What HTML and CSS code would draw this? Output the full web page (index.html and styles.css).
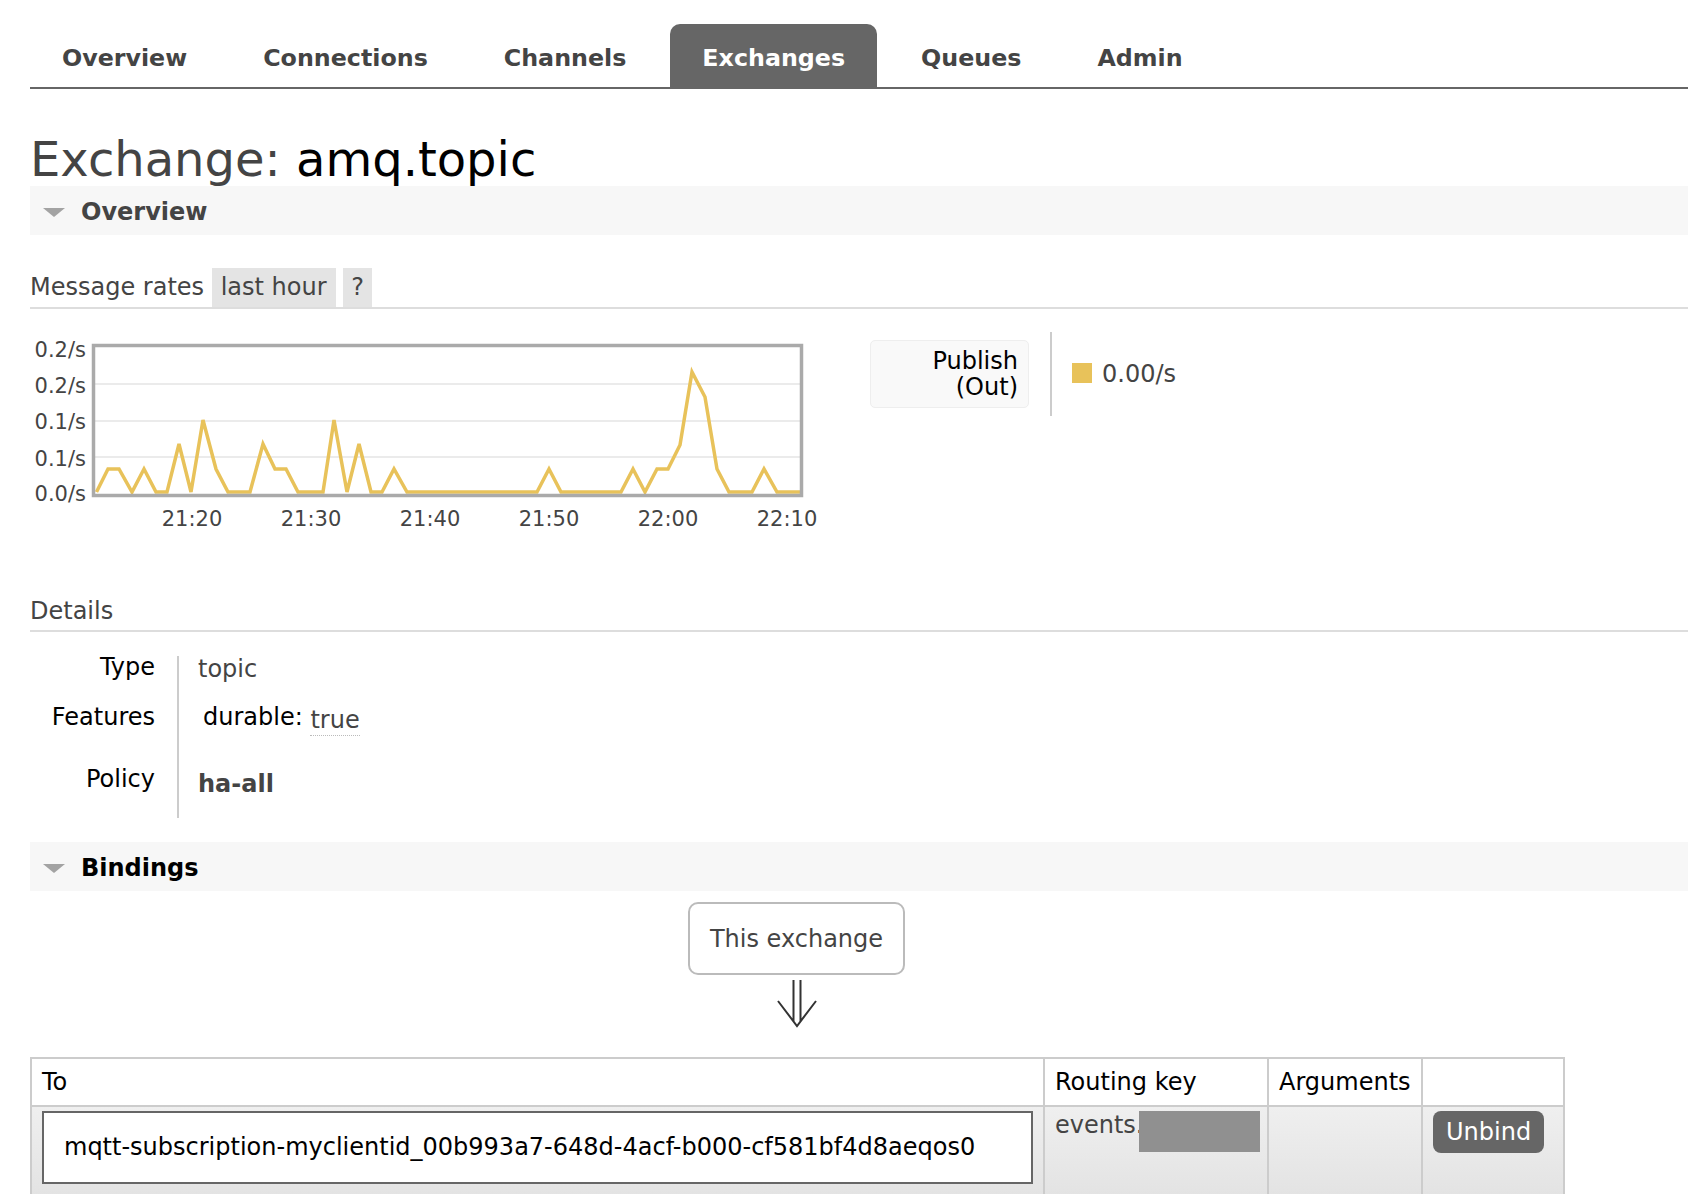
FILE: index.html
```html
<!DOCTYPE html>
<html lang="en">
<head>
<meta charset="utf-8">
<title>RabbitMQ Management: Exchange amq.topic</title>
<link rel="stylesheet" href="styles.css">
</head>
<body>
<nav class="tabs">
  <ul>
    <li><a href="#">Overview</a></li>
    <li><a href="#">Connections</a></li>
    <li><a href="#">Channels</a></li>
    <li class="active"><a href="#">Exchanges</a></li>
    <li><a href="#">Queues</a></li>
    <li><a href="#">Admin</a></li>
  </ul>
</nav>
<main class="main">
  <h1 class="title"><span class="title-kind">Exchange:</span> <span class="title-name">amq.topic</span></h1>

  <section class="section">
    <h2 class="section-head"><span class="tri"></span>Overview</h2>
    <h3 class="subhead rates-head">Message rates <span class="pill">last hour</span> <span class="pill">?</span></h3>
    <div class="chart-row">
      <svg class="chart" width="800" height="200" viewBox="30 330 800 200">
        <g class="grid">
          <line x1="95" y1="384" x2="801" y2="384"/>
          <line x1="95" y1="421" x2="801" y2="421"/>
          <line x1="95" y1="457" x2="801" y2="457"/>
        </g>
        <polyline class="series" points="96.5,492 108,469 119,469 132,492 144,469 156,492 167,492 179,444 191,492 203,420 216,469 228,492 250,492 263,444 275,469 286,469 298,492 323,492 334,420 347,492 359,444 371,492 382,492 394,469 407,492 537,492 549,469 561,492 621,492 633,469 645,492 657,469 668,469 680,445 692,372 705,397 717,469 729,492 752,492 764,469 777,492 800,492"/>
        <rect class="frame" x="93.5" y="345.5" width="708" height="150"/>
        <g class="ylabels">
          <text x="86" y="357">0.2/s</text>
          <text x="86" y="393">0.2/s</text>
          <text x="86" y="429">0.1/s</text>
          <text x="86" y="466">0.1/s</text>
          <text x="86" y="501">0.0/s</text>
        </g>
        <g class="xlabels">
          <text x="192" y="526">21:20</text>
          <text x="311" y="526">21:30</text>
          <text x="430" y="526">21:40</text>
          <text x="549" y="526">21:50</text>
          <text x="668" y="526">22:00</text>
          <text x="787" y="526">22:10</text>
        </g>
      </svg>
      <div class="legend">
        <div class="legend-label">Publish<br>(Out)</div>
        <div class="legend-divider"></div>
        <span class="swatch"></span>
        <span class="legend-value">0.00/s</span>
      </div>
    </div>

    <h3 class="subhead details-head">Details</h3>
    <dl class="details">
      <dt class="row-type">Type</dt>
      <dd class="row-type val-type">topic</dd>
      <dt class="row-features">Features</dt>
      <dd class="row-features val-features">durable: <span class="flag">true</span></dd>
      <dt class="row-policy">Policy</dt>
      <dd class="row-policy val-policy">ha-all</dd>
    </dl>
  </section>

  <section class="section">
    <h2 class="section-head bindings-head"><span class="tri"></span>Bindings</h2>
    <div class="exchange-wrap">
      <span class="exchange-box">This exchange</span>
      <svg class="arrow" width="40" height="48" viewBox="0 0 40 48"><path d="M16.5 0V41M23.5 0V41M1 21L20 46L39 21" fill="none" stroke="#333" stroke-width="2"/></svg>
    </div>
    <table class="bindings">
      <colgroup>
        <col class="c-to">
        <col class="c-key">
        <col class="c-args">
        <col class="c-act">
      </colgroup>
      <thead>
        <tr><th>To</th><th>Routing key</th><th>Arguments</th><th></th></tr>
      </thead>
      <tbody>
        <tr>
          <td><div class="dest">mqtt-subscription-myclientid_00b993a7-648d-4acf-b000-cf581bf4d8aeqos0</div></td>
          <td class="key">events.<span class="redact"></span></td>
          <td></td>
          <td class="act"><span class="btn">Unbind</span></td>
        </tr>
      </tbody>
    </table>
  </section>
</main>
</body>
</html>
```
FILE: styles.css
```css
html {
  overflow: hidden;
}
body {
  margin: 0;
  font-family: "DejaVu Sans", Verdana, sans-serif;
  font-size: 24px;
  color: #444;
  background: #fff;
}

/* Tabs */
.tabs {
  padding: 24px 0 0 30px;
}
.tabs ul {
  list-style: none;
  margin: 0;
  padding: 0;
  display: flex;
  gap: 12px;
  border-bottom: 2px solid #666;
}
.tabs a {
  display: block;
  padding: 5px 32px 0;
  line-height: 58px;
  font-size: 23.75px;
  font-weight: bold;
  color: #444;
  text-decoration: none;
}
.tabs .active a {
  background: #666;
  color: #fff;
  border-radius: 10px 10px 0 0;
}

/* Main */
.main {
  padding-left: 30px;
}
.title {
  margin: 43px 0 0;
  font-size: 48px;
  line-height: 54px;
  font-weight: normal;
  color: #444;
}
.title-name {
  color: #000;
}

.section-head {
  box-sizing: border-box;
  margin: 0;
  height: 49px;
  padding: 4px 0 0 13px;
  line-height: 45px;
  background: #f7f7f7;
  display: flex;
  align-items: center;
  font-size: 24px;
  font-weight: bold;
  color: #444;
}
.bindings-head {
  color: #000;
  margin-top: 24px;
}
.tri {
  width: 0;
  height: 0;
  border-left: 11px solid transparent;
  border-right: 11px solid transparent;
  border-top: 9px solid #a3a3a3;
  margin-right: 16px;
}

.subhead {
  box-sizing: border-box;
  margin: 0;
  height: 41px;
  padding-top: 2px;
  font-size: 24px;
  font-weight: normal;
  line-height: 37px;
  color: #444;
  border-bottom: 2px solid #ddd;
}
.rates-head {
  margin-top: 33px;
  padding-top: 0;
  line-height: 39px;
}
.pill {
  display: inline-block;
  background: #e4e4e4;
  padding: 0 9px;
  line-height: 39px;
}
.pill:last-child {
  padding: 0 8px;
}

/* Chart */
.chart-row {
  display: flex;
  align-items: flex-start;
  margin-top: 21px;
}
.chart {
  display: block;
  flex: none;
}
.grid line {
  stroke: #ebebeb;
  stroke-width: 2;
}
.series {
  fill: none;
  stroke: #e8c25a;
  stroke-width: 3.5;
  stroke-linejoin: miter;
}
.frame {
  fill: none;
  stroke: #aaa;
  stroke-width: 3.5;
}
.ylabels text,
.xlabels text {
  font-family: "DejaVu Sans", Verdana, sans-serif;
  font-size: 21px;
  fill: #444;
}
.ylabels text {
  text-anchor: end;
}
.xlabels text {
  text-anchor: middle;
}

.legend {
  display: flex;
  align-items: flex-start;
  margin-left: 40px;
}
.legend-label {
  margin-top: 10px;
  width: 159px;
  box-sizing: border-box;
  padding: 7px 10px;
  background: #f9f9f9;
  border: 1px solid #eee;
  border-radius: 5px;
  text-align: right;
  line-height: 26px;
  color: #000;
}
.legend-divider {
  margin: 2px 0 0 21px;
  width: 2px;
  height: 84px;
  background: #ccc;
}
.swatch {
  margin: 33px 0 0 20px;
  width: 20px;
  height: 20px;
  background: #e8c25a;
}
.legend-value {
  margin: 30px 0 0 10px;
  line-height: 28px;
  color: #444;
}

/* Details */
.details-head {
  margin-top: 61px;
}
.details {
  margin: 24px 0 0;
  display: grid;
  grid-template-columns: 149px 1fr;
  grid-template-rows: 50px 62px 50px;
  line-height: 22px;
}
.details dt {
  box-sizing: border-box;
  text-align: right;
  padding-right: 22px;
  border-right: 2px solid #ccc;
  color: #000;
}
.details dd {
  margin: 0;
  padding-left: 19px;
  color: #444;
}
.val-type {
  padding-top: 2px;
}
.details dd.val-features {
  padding-left: 24px;
  color: #000;
}
.flag {
  display: inline-block;
  position: relative;
  top: 3px;
  line-height: 20px;
  padding-bottom: 5px;
  color: #444;
  border-bottom: 1px dotted #bbb;
}
.val-policy {
  padding-top: 5px;
  font-weight: bold;
}

/* Bindings */
.exchange-wrap {
  width: 1533px;
  margin-top: 11px;
  text-align: center;
}
.exchange-box {
  display: inline-block;
  box-sizing: border-box;
  height: 73px;
  border: 2px solid #bbb;
  border-radius: 10px;
  padding: 2px 20px 0;
  line-height: 67px;
  color: #444;
}
.arrow {
  display: block;
  margin: 5px auto 0;
}

.bindings {
  margin-top: 29px;
  border-collapse: collapse;
  table-layout: fixed;
  width: 1533px;
}
.c-to { width: 1013px; }
.c-key { width: 224px; }
.c-args { width: 154px; }
.c-act { width: 142px; }
.bindings th,
.bindings td {
  border: 2px solid #ccc;
}
.bindings th {
  text-align: left;
  font-weight: normal;
  color: #000;
  padding: 0 10px;
  line-height: 46px;
  background: #fff;
}
.bindings td {
  vertical-align: top;
  padding: 4px 10px 12px;
  line-height: 28px;
  background: linear-gradient(#efefef, #e3e3e3);
}
.dest {
  box-sizing: border-box;
  height: 73px;
  border: 2px solid #666;
  background: #fff;
  padding-left: 20px;
  line-height: 69px;
  color: #000;
  white-space: nowrap;
  overflow: hidden;
}
.key {
  color: #444;
  white-space: nowrap;
  overflow: hidden;
}
.redact {
  display: inline-block;
  width: 121px;
  height: 41px;
  margin-left: -5px;
  background: #909090;
  vertical-align: top;
}
.btn {
  display: inline-block;
  background: #666;
  color: #fff;
  border-radius: 8px;
  padding: 0 13px;
  line-height: 42px;
}
```
